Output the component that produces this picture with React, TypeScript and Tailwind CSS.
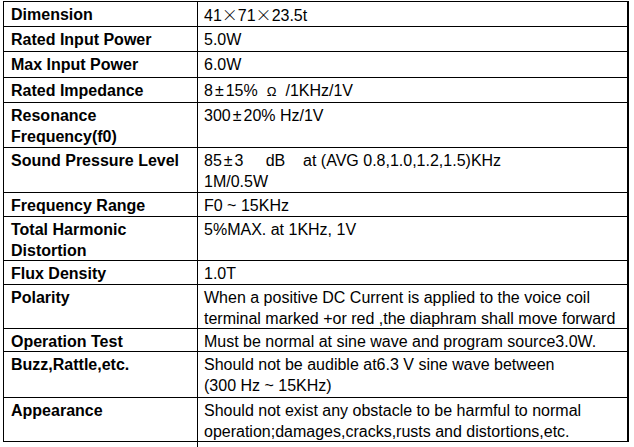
import React from 'react';

interface SpecRow {
  label: React.ReactNode;
  value: React.ReactNode;
  height: string;
}

const Times = () => <span className="font-['Noto_Sans_CJK_SC',sans-serif] font-light">×</span>;
const PlusMinus = () => <span className="mx-[2px]">±</span>;

const rows: SpecRow[] = [
  {
    label: 'Dimension',
    value: (
      <>
        41<Times />71<Times />23.5t
      </>
    ),
    height: 'h-[25px]',
  },
  { label: 'Rated Input Power', value: '5.0W', height: 'h-[25px]' },
  { label: 'Max Input Power', value: '6.0W', height: 'h-[26px]' },
  {
    label: 'Rated Impedance',
    value: (
      <>
        8<PlusMinus />15%<span className="mx-[9px] text-[13px]">Ω</span>/1KHz/1V
      </>
    ),
    height: 'h-[25px]',
  },
  {
    label: (
      <>
        Resonance
        <br />
        Frequency(f0)
      </>
    ),
    value: (
      <>
        300<PlusMinus />20% Hz/1V
      </>
    ),
    height: 'h-[45px]',
  },
  {
    label: 'Sound Pressure Level',
    value: (
      <>
        85<PlusMinus />3{'\u00a0\u00a0\u00a0\u00a0\u00a0'}dB{'\u00a0\u00a0\u00a0\u00a0'}at (AVG 0.8,1.0,1.2,1.5)KHz
        <br />
        1M/0.5W
      </>
    ),
    height: 'h-[45px]',
  },
  { label: 'Frequency Range', value: 'F0 ~ 15KHz', height: 'h-[24px]' },
  {
    label: (
      <>
        Total Harmonic
        <br />
        Distortion
      </>
    ),
    value: '5%MAX. at 1KHz, 1V',
    height: 'h-[44px]',
  },
  { label: 'Flux Density', value: '1.0T', height: 'h-[24px]' },
  {
    label: 'Polarity',
    value: (
      <>
        When a positive DC Current is applied to the voice coil
        <br />
        terminal marked +or red ,the diaphram shall move forward
      </>
    ),
    height: 'h-[44px]',
  },
  {
    label: 'Operation Test',
    value: 'Must be normal at sine wave and program source3.0W.',
    height: 'h-[23px]',
  },
  {
    label: 'Buzz,Rattle,etc.',
    value: (
      <>
        Should not be audible at6.3 V sine wave between
        <br />
        (300 Hz ~ 15KHz)
      </>
    ),
    height: 'h-[46px]',
  },
  {
    label: 'Appearance',
    value: (
      <>
        Should not exist any obstacle to be harmful to normal
        <br />
        operation;damages,cracks,rusts and distortions,etc.
      </>
    ),
    height: 'h-[44px]',
  },
];

export default function App() {
  return (
    <div className="min-h-[447px] bg-white font-['Liberation_Sans',Arial,sans-serif] text-[16px] leading-[21px] text-black">
      <div className="ml-[3px] mt-px w-[626px] border-l border-r-2 border-t border-black">
        {rows.map((row, i) => (
          <div key={i} className={`flex border-b border-black ${row.height}`}>
            <div className="w-[194px] shrink-0 border-r border-black pl-[7px] pt-[2px] font-bold whitespace-nowrap">
              {row.label}
            </div>
            <div className="flex-1 pl-[6px] pt-[2px] whitespace-nowrap">{row.value}</div>
          </div>
        ))}
      </div>
      {/* start of the next (cut off) row */}
      <div className="flex h-[6px]">
        <div className="w-[197px]" />
        <div className="w-px bg-black" />
      </div>
    </div>
  );
}
